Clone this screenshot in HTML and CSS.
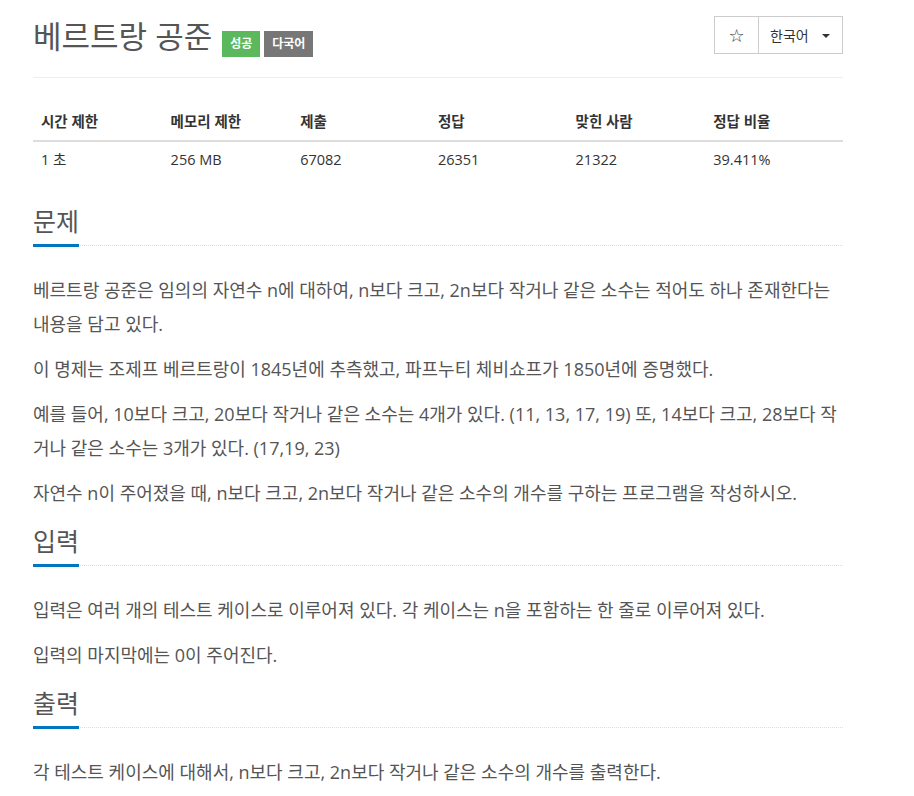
FILE: index.html
```html
<!DOCTYPE html>
<html lang="ko">
<head>
    <meta charset="UTF-8">
    <meta name="viewport" content="width=device-width, initial-scale=1.0">
    <title>베르트랑 공준</title>
    <link rel="stylesheet" href="styles.css">
</head>
<body>

<div class="container">
    <div class="page-header">
        <h1 class="title">
            <span class="title-text">베르트랑 공준</span>
            <span class="label label-success">성공</span>
            <span class="label label-default">다국어</span>
        </h1>
        <div class="btn-group">
            <button class="btn btn-star">&#9734;</button>
            <button class="btn btn-lang">한국어 <span class="caret"></span></button>
        </div>
    </div>

    <table class="info-table">
        <thead>
            <tr>
                <th class="w16">시간 제한</th>
                <th class="w16">메모리 제한</th>
                <th class="w17">제출</th>
                <th class="w17">정답</th>
                <th class="w17">맞힌 사람</th>
                <th class="w17">정답 비율</th>
            </tr>
        </thead>
        <tbody>
            <tr>
                <td>1 초</td>
                <td>256 MB</td>
                <td>67082</td>
                <td>26351</td>
                <td>21322</td>
                <td>39.411%</td>
            </tr>
        </tbody>
    </table>

    <section class="problem-section">
        <div class="headline"><h2>문제</h2></div>
        <div class="problem-text">
            <p>베르트랑 공준은 임의의 자연수 n에 대하여, n보다 크고, 2n보다 작거나 같은 소수는 적어도 하나 존재한다는 내용을 담고 있다.</p>
            <p>이 명제는 조제프 베르트랑이 1845년에 추측했고, 파프누티 체비쇼프가 1850년에 증명했다.</p>
            <p>예를 들어, 10보다 크고, 20보다 작거나 같은 소수는 4개가 있다. (11, 13, 17, 19) 또, 14보다 크고, 28보다 작거나 같은 소수는 3개가 있다. (17,19, 23)</p>
            <p>자연수 n이 주어졌을 때, n보다 크고, 2n보다 작거나 같은 소수의 개수를 구하는 프로그램을 작성하시오.</p>
        </div>
    </section>

    <section class="problem-section">
        <div class="headline"><h2>입력</h2></div>
        <div class="problem-text">
            <p>입력은 여러 개의 테스트 케이스로 이루어져 있다. 각 케이스는 n을 포함하는 한 줄로 이루어져 있다.</p>
            <p>입력의 마지막에는 0이 주어진다.</p>
        </div>
    </section>

    <section class="problem-section">
        <div class="headline"><h2>출력</h2></div>
        <div class="problem-text">
            <p>각 테스트 케이스에 대해서, n보다 크고, 2n보다 작거나 같은 소수의 개수를 출력한다.</p>
        </div>
    </section>
</div>

</body>
</html>
```

FILE: styles.css
```css
body {
    margin: 0;
    font-family: 'Open Sans', 'Noto Sans CJK KR', sans-serif;
    color: #333;
    background: #fff;
}

.container {
    width: 810px;
    margin-left: 33px;
}

.page-header {
    display: flex;
    justify-content: space-between;
    align-items: flex-start;
    padding-top: 16px;
    padding-bottom: 20px;
    border-bottom: 1px solid #eee;
}

.title {
    display: flex;
    align-items: flex-start;
    margin: 2px 0 0 0;
    font-size: 31px;
    font-weight: normal;
    line-height: 36px;
    color: #555;
}

.title-text {
    margin-right: 10px;
}

.label {
    margin-top: 13px;
    margin-right: 4px;
    padding: 0 8px;
    font-size: 12px;
    font-weight: bold;
    line-height: 26px;
    color: #fff;
}

.label-success {
    background-color: #5cb85c;
}

.label-default {
    background-color: #777;
}

.btn-group {
    display: flex;
}

.btn {
    height: 38px;
    border: 1px solid #ccc;
    background: #fff;
    color: #333;
    font-family: 'Open Sans', 'Noto Sans CJK KR', sans-serif;
    font-size: 14px;
    cursor: pointer;
    display: flex;
    align-items: center;
}

.btn-star {
    width: 45px;
    justify-content: center;
    font-family: 'DejaVu Sans', sans-serif;
    font-size: 18px;
}

.btn-lang {
    width: 85px;
    margin-left: -1px;
    padding: 0 12px 0 11px;
    gap: 13px;
}

.caret {
    width: 0;
    height: 0;
    margin-top: 2px;
    border-top: 4px solid #333;
    border-left: 4px solid transparent;
    border-right: 4px solid transparent;
}

.info-table {
    width: 100%;
    margin-top: 26px;
    margin-bottom: 23px;
    border-collapse: collapse;
    font-size: 14.5px;
    line-height: 20px;
}

.info-table th,
.info-table td {
    padding: 8px;
    text-align: left;
}

.info-table th {
    font-weight: bold;
    border-bottom: 2px solid #ddd;
}

.w16 {
    width: 16%;
}

.w17 {
    width: 17%;
}

.headline {
    display: flex;
    border-bottom: 1px dotted #ddd;
    margin-bottom: 27px;
}

.headline h2 {
    margin: 0 0 -2px 0;
    padding: 3px 0 6px 0;
    font-size: 25px;
    font-weight: normal;
    line-height: 34px;
    color: #555;
    border-bottom: 3px solid #0076c0;
}

.problem-text {
    font-size: 18px;
    line-height: 34px;
    color: #555;
    word-break: break-all;
}

.problem-text p {
    margin: 0 0 11px 0;
}
```
